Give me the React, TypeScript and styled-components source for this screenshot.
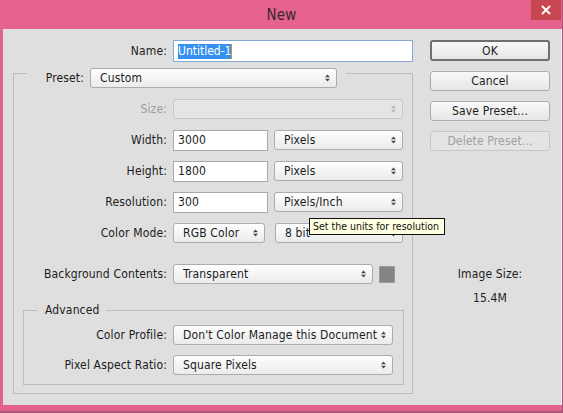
import React from "react";
import styled, { createGlobalStyle } from "styled-components";

const GlobalStyle = createGlobalStyle`
  html, body {
    margin: 0;
    padding: 0;
    background: #e5628e;
    width: 563px;
    height: 413px;
    overflow: hidden;
  }
  body {
    font-family: "DejaVu Sans Condensed", "DejaVu Sans", sans-serif;
    font-stretch: condensed;
    font-size: 12px;
    letter-spacing: 0.15px;
    color: #1c1c1c;
  }
`;

const PANEL = "#dfdfdf";

const Window = styled.div`
  box-sizing: border-box;
  width: 563px;
  height: 413px;
  background: #e5628e;
  border-right: 1px solid #a85677;
  border-bottom: 2px solid #a85677;
  display: flex;
  flex-direction: column;
`;

const TitleBar = styled.div`
  height: 29px;
  flex: none;
  display: grid;
  grid-template-columns: 1fr auto 1fr;
  align-items: center;
`;

const Title = styled.div`
  grid-column: 2;
  font-size: 15px;
  color: #3b2630;
  padding-left: 1px;
`;

const CloseBtn = styled.div`
  grid-column: 3;
  justify-self: end;
  align-self: start;
  width: 30px;
  height: 20px;
  margin-right: 1px;
  background: #c7464f;
  display: flex;
  align-items: center;
  justify-content: center;
`;

const Panel = styled.div`
  box-sizing: border-box;
  height: 376px;
  flex: none;
  margin: 0 0 0 3px;
  background: ${PANEL};
  border-right: 1px solid #f1f1f1;
  display: flex;
  padding: 11px 0 0 10px;
`;

const LeftCol = styled.div`
  width: 400px;
  display: flex;
  flex-direction: column;
`;

const RightCol = styled.div`
  width: 120px;
  margin-left: 17px;
  display: flex;
  flex-direction: column;
`;

const Row = styled.div`
  display: flex;
  align-items: center;
  height: 20px;
  flex: none;
`;

const Label = styled.div<{ $w: number; $dim?: boolean }>`
  width: ${(p) => p.$w}px;
  margin-right: 6px;
  text-align: right;
  white-space: nowrap;
  flex: none;
  color: ${(p) => (p.$dim ? "#9d9d9d" : "#1c1c1c")};
`;

const TextInput = styled.div<{ $w: number; $focus?: boolean }>`
  box-sizing: border-box;
  width: ${(p) => p.$w}px;
  height: ${(p) => (p.$focus ? 22 : 21)}px;
  background: #fff;
  border: 1px solid ${(p) => (p.$focus ? "#86a9d4" : "#a9a9a9")};
  display: flex;
  align-items: center;
  padding-left: 4px;
  flex: none;
`;

const Selected = styled.span`
  background: #3590f0;
  color: #fff;
  line-height: 15px;
  letter-spacing: 0;
`;

const Caret = styled.span`
  width: 1px;
  height: 15px;
  background: #e08a2c;
`;

const SelectBox = styled.div<{ $w: number; $disabled?: boolean }>`
  position: relative;
  box-sizing: border-box;
  width: ${(p) => p.$w}px;
  height: 20px;
  flex: none;
  border: 1px solid ${(p) => (p.$disabled ? "#c6c6c6" : "#acacac")};
  border-radius: 3px;
  background: ${(p) =>
    p.$disabled ? "#e5e5e5" : "linear-gradient(#fefefe, #ebebeb)"};
  display: flex;
  align-items: center;
  justify-content: space-between;
  padding: 0 6px 0 9px;
  white-space: nowrap;
`;

const Group = styled.div`
  box-sizing: border-box;
  border: 1px solid #bcbcbc;
  display: flex;
  flex-direction: column;
`;

const PresetGroup = styled(Group)`
  margin-top: 11px;
  height: 321px;
  padding-bottom: 8px;
`;

const AdvancedGroup = styled(Group)`
  margin: 26px 8px 0 9px;
  height: 75px;
`;

const GroupHeader = styled.div<{ $top: number; $pl: number; $pr: number }>`
  align-self: flex-start;
  display: flex;
  align-items: center;
  margin: ${(p) => p.$top}px 0 0 13px;
  padding: 0 ${(p) => p.$pr}px 0 ${(p) => p.$pl}px;
  background: ${PANEL};
`;

const Rows = styled.div<{ $gap: number; $top: number }>`
  display: flex;
  flex-direction: column;
  gap: ${(p) => p.$gap}px;
  margin-top: ${(p) => p.$top}px;
`;

const Gap = styled.div<{ $w: number }>`
  width: ${(p) => p.$w}px;
  flex: none;
`;

const Swatch = styled.div`
  width: 16px;
  height: 17px;
  margin-left: 6px;
  background: #848484;
  border: 1px solid #9a9a9a;
  box-sizing: border-box;
`;

const Tooltip = styled.div`
  position: absolute;
  left: 34px;
  top: 25px;
  z-index: 5;
  box-sizing: border-box;
  width: 136px;
  height: 17px;
  background: #ffffe1;
  border: 1px solid #111;
  font-size: 10.5px;
  letter-spacing: 0;
  line-height: 15px;
  padding-left: 3px;
  color: #111;
  white-space: nowrap;
`;

const Button = styled.div<{ $default?: boolean; $disabled?: boolean }>`
  box-sizing: border-box;
  width: 120px;
  height: ${(p) => (p.$default ? 21 : 20)}px;
  margin-bottom: 10px;
  border: ${(p) =>
    p.$default ? "2px solid #6f6f6f" : `1px solid ${p.$disabled ? "#c6c6c6" : "#acacac"}`};
  border-radius: 3px;
  background: ${(p) =>
    p.$disabled ? "#e4e4e4" : "linear-gradient(#f8f8f8, #e6e6e6)"};
  color: ${(p) => (p.$disabled ? "#a0a0a0" : "#1c1c1c")};
  display: flex;
  align-items: center;
  justify-content: center;
`;

const Info = styled.div`
  margin-top: 105px;
  text-align: center;
  line-height: 16px;
  display: flex;
  flex-direction: column;
  gap: 8px;
`;

const Arrows = ({ dim }: { dim?: boolean }) => (
  <svg width="5" height="8" viewBox="0 0 5 8">
    <path d="M0 3.2 L2.5 0.5 L5 3.2 Z M0 4.8 L2.5 7.5 L5 4.8 Z" fill={dim ? "#b4b4b4" : "#4a4a4a"} />
  </svg>
);

const Select: React.FC<{ w: number; value?: string; disabled?: boolean; children?: React.ReactNode }> = ({
  w,
  value,
  disabled,
  children,
}) => (
  <SelectBox $w={w} $disabled={disabled}>
    <span>{value}</span>
    <Arrows dim={disabled} />
    {children}
  </SelectBox>
);

export default function App() {
  return (
    <>
      <GlobalStyle />
      <Window>
        <TitleBar>
          <Title>New</Title>
          <CloseBtn>
            <svg width="10" height="10" viewBox="0 0 10 10">
              <path d="M1 1 L9 9 M9 1 L1 9" stroke="#fff" strokeWidth="2" />
            </svg>
          </CloseBtn>
        </TitleBar>
        <Panel>
          <LeftCol>
            <Row style={{ height: 22 }}>
              <Label $w={154}>Name:</Label>
              <TextInput $w={240} $focus>
                <Selected>Untitled-1</Selected>
                <Caret />
              </TextInput>
            </Row>

            <PresetGroup>
              <GroupHeader $top={-6} $pl={18} $pr={9}>
                <Label $w={39}>Preset:</Label>
                <Select w={247} value="Custom" />
              </GroupHeader>

              <Rows $gap={11} $top={11}>
                <Row>
                  <Label $w={153} $dim>Size:</Label>
                  <Select w={230} disabled />
                </Row>
                <Row>
                  <Label $w={153}>Width:</Label>
                  <TextInput $w={95}>3000</TextInput>
                  <Gap $w={6} />
                  <Select w={129} value="Pixels" />
                </Row>
                <Row>
                  <Label $w={153}>Height:</Label>
                  <TextInput $w={95}>1800</TextInput>
                  <Gap $w={6} />
                  <Select w={129} value="Pixels" />
                </Row>
                <Row>
                  <Label $w={153}>Resolution:</Label>
                  <TextInput $w={95}>300</TextInput>
                  <Gap $w={6} />
                  <Select w={129} value="Pixels/Inch">
                    <Tooltip>Set the units for resolution</Tooltip>
                  </Select>
                </Row>
                <Row>
                  <Label $w={153}>Color Mode:</Label>
                  <Select w={92} value="RGB Color" />
                  <Gap $w={10} />
                  <Select w={128} value="8 bit" />
                </Row>
              </Rows>

              <Rows $gap={0} $top={21}>
                <Row>
                  <Label $w={153}>Background Contents:</Label>
                  <Select w={200} value="Transparent" />
                  <Swatch />
                </Row>
              </Rows>

              <AdvancedGroup>
                <GroupHeader $top={-8} $pl={8} $pr={6}>
                  <span style={{ lineHeight: "14px" }}>Advanced</span>
                </GroupHeader>
                <Rows $gap={10} $top={8}>
                  <Row>
                    <Label $w={143}>Color Profile:</Label>
                    <Select w={220} value="Don't Color Manage this Document" />
                  </Row>
                  <Row>
                    <Label $w={143}>Pixel Aspect Ratio:</Label>
                    <Select w={220} value="Square Pixels" />
                  </Row>
                </Rows>
              </AdvancedGroup>
            </PresetGroup>
          </LeftCol>

          <RightCol>
            <Button $default>OK</Button>
            <Button>Cancel</Button>
            <Button>Save Preset...</Button>
            <Button $disabled>Delete Preset...</Button>
            <Info>
              <div>Image Size:</div>
              <div>15.4M</div>
            </Info>
          </RightCol>
        </Panel>
      </Window>
    </>
  );
}
